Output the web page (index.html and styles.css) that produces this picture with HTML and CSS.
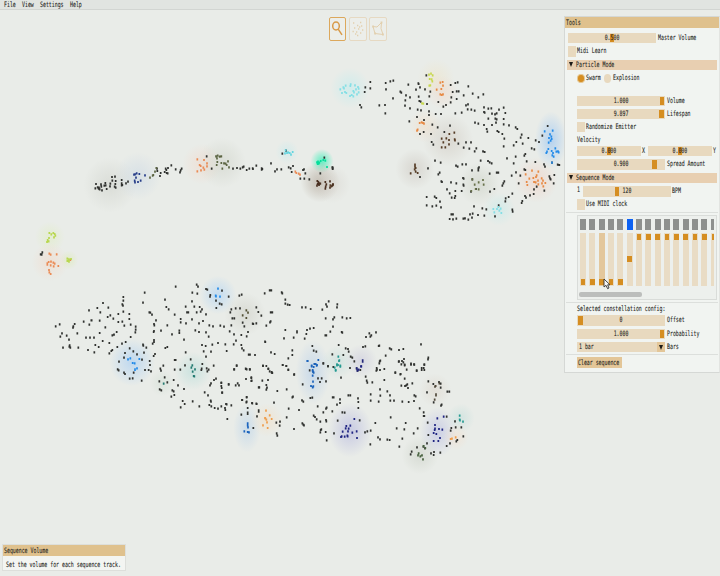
FILE: index.html
```html
<!DOCTYPE html>
<html lang="en">
<head>
<meta charset="utf-8">
<title>Particle sequencer</title>
<link rel="stylesheet" href="styles.css">
</head>
<body>
<svg class="field" id="field" viewBox="0 0 720 576"></svg>
<nav class="menu"><span class="t">File</span><span class="t">View</span><span class="t">Settings</span><span class="t">Help</span></nav>
<div class="tools">
  <div class="tool active"><svg viewBox="0 0 18 24"><ellipse cx="7" cy="9" rx="3.3" ry="4"/><path d="M9.2 12.2L13 17.8"/></svg></div>
  <div class="tool"><svg viewBox="0 0 18 24"><path stroke-width="1.3" d="M4 6h1.3M11 5.5h1.3M8 8.5h1.3M12 9h1.3M5 11h1.3M9 12h1.3M13 13h1.3M3.5 14.5h1.3M7 15h1.3M11 16h1.3M8 18.5h1.3M10 10h1.3M6 17h1.3"/></svg></div>
  <div class="tool"><svg viewBox="0 0 18 24"><path d="M4 9.5L8 10L12.5 5.5L12 11.5L14 17.5L6 16.5Z"/><path stroke-width="1.8" d="M3.2 9.5h1.8M11.6 5.5h1.8M13 17.5h1.8M5.2 16.5h1.8"/></svg></div>
</div>

<section class="panel">
  <h2 class="title"><span class="t">Tools</span></h2>
  <div class="content">
    <div class="row top"><div class="slider"><i class="grab mid"></i><span class="t c">0.500</span></div><span class="t">Master Volume</span></div>
    <div class="row top tight"><i class="check"></i><span class="t">Midi Learn</span></div>
    <div class="header"><b class="arrow"></b><span class="t">Particle Mode</span></div>
    <div class="row radios"><i class="radio on"></i><span class="t swarm">Swarm</span><i class="radio"></i><span class="t">Explosion</span></div>
    <div class="row"><div class="slider"><i class="grab end"></i><span class="t c">1.000</span></div><span class="t">Volume</span></div>
    <div class="row"><div class="slider"><i class="grab near"></i><span class="t c">9.897</span></div><span class="t">Lifespan</span></div>
    <div class="row tight"><i class="check"></i><span class="t">Randomize Emitter</span></div>
    <div class="row velocity"><span class="t">Velocity</span></div>
    <div class="row"><div class="slider half"><i class="grab mid"></i><span class="t c">0.000</span></div><span class="t axis">X</span><div class="slider half"><i class="grab mid"></i><span class="t c">0.000</span></div><span class="t">Y</span></div>
    <div class="row"><div class="slider"><i class="grab spread"></i><span class="t c">0.900</span></div><span class="t">Spread Amount</span></div>
    <div class="header"><b class="arrow"></b><span class="t">Sequence Mode</span></div>
    <div class="row"><span class="t beat">1</span><div class="slider"><i class="grab tempo"></i><span class="t c">120</span></div><span class="t">BPM</span></div>
    <div class="row tight midi"><i class="check"></i><span class="t">Use MIDI clock</span></div>
    <hr>
    <div class="sequencer"><div class="tracks" id="tracks"></div><div class="scroll"></div></div>
    <hr>
    <div class="row caption"><span class="t">Selected constellation config:</span></div>
    <div class="row"><div class="slider"><i class="grab start"></i><span class="t c">0</span></div><span class="t">Offset</span></div>
    <div class="row"><div class="slider"><i class="grab end"></i><span class="t c">1.000</span></div><span class="t">Probability</span></div>
    <div class="row"><div class="slider combo"><span class="t">1 bar</span><div class="drop"><b class="arrow"></b></div></div><span class="t">Bars</span></div>
    <hr class="last">
    <div class="button"><span class="t">Clear sequence</span></div>
  </div>
</section>
<svg class="cursor" viewBox="0 0 8 12"><path d="M1 1V9L3 7.3L4.6 10.7L6 10L4.6 6.8H7Z"/></svg>

<aside class="tip"><h2 class="title"><span class="t">Sequence Volume</span></h2><p><span class="t">Set the volume for each sequence track.</span></p></aside>
<script src="field.js"></script>
</body>
</html>
```
FILE: styles.css
```css
* { box-sizing: border-box; }
body { margin: 0; width: 720px; height: 576px; overflow: hidden; position: relative; background: #e9ece8; color: #262622; font: 7.4px/10px "DejaVu Sans Mono", monospace; }
.t { display: block; white-space: nowrap; transform: scaleX(.662); transform-origin: left center; -webkit-text-stroke: .1px #262622; }
.field { position: absolute; inset: 0; width: 720px; height: 576px; }
.menu { position: relative; display: grid; grid-template-columns: 18.3px 18.3px 30px 40px; height: 10px; padding-left: 3.5px; background: #e1e4e1; border-bottom: 1px solid #d2d5d2; line-height: 10px; }
.tools { position: absolute; left: 328.5px; top: 16.5px; display: flex; gap: 2.8px; }
.tool { width: 17.7px; height: 24px; border: 1.4px solid #e6d9c2; border-radius: 2px; background: #eceeea; }
.tool svg { display: block; width: 18px; height: 24px; margin: -1px; fill: none; stroke: #e2cfae; stroke-width: 1; }
.tool.active { border-color: #dca85c; }
.tool.active svg { stroke: #d89a48; stroke-width: 1.5; }
.title { margin: 0; font: inherit; background: #dfc18d; padding-left: 1.3px; height: 11px; line-height: 11px; }
.panel { position: absolute; left: 564px; top: 16px; width: 156px; height: 357px; background: #f1f4f1; border: 1px solid #d5d8d5; border-right-color: #e2e4e1; }
.content { padding: 5px 2px 0; }
.row { display: flex; height: 10.4px; margin: 0 0 2.9px 10px; gap: 1.6px; line-height: 10.6px; }
.row.top { margin-left: 1px; }
.row.tight { gap: 1px; }
.slider { position: relative; width: 88px; flex: none; background: #e8d9bf; }
.c { position: relative; transform-origin: center; text-align: center; }
.grab { position: absolute; top: 1px; bottom: 1px; width: 4.6px; background: #d58e22; }
.mid { left: calc(50% - 2.3px); }
.end { right: .6px; }
.near { right: 1.4px; }
.start { left: .6px; width: 5.5px; }
.spread { left: 75px; }
.tempo { left: 32px; }
.check { width: 8px; height: 10.4px; background: #e8d9bf; flex: none; }
.header { display: flex; align-items: center; height: 10.6px; margin-bottom: 2.9px; background: #e8cfb1; gap: 3.2px; padding-left: 1.6px; }
.arrow { width: 0; height: 0; border: 2.8px solid transparent; border-top: 5.6px solid #1d1b17; border-bottom: 0; }
.radios { margin-bottom: 12.1px; align-items: center; gap: 1.5px; }
.radio { width: 7.6px; height: 8.6px; border-radius: 50%; background: #e8d9bf; flex: none; }
.radio.on { background: #d58e22; border: 1.2px solid #e5c997; }
.swarm { width: 16px; }
.velocity { height: 10.7px; line-height: 9px; margin-bottom: 0; }
.half { width: 63.8px; }
.axis { width: 4px; }
.beat { width: 4px; line-height: 8px; }
.midi { margin-bottom: 2px; }
hr { border: 0; height: 1px; margin: 0 -1px 2px; background: #dcdfdc; }
.sequencer { margin: 0 0 2px 9.5px; width: 140px; height: 85px; border: 1px solid #d9dcd9; background: #edf0ed; padding: 3px 1.6px 0 2.5px; }
.tracks { display: flex; gap: 3.35px; overflow: hidden; height: 68px; }
.track { flex: none; width: 6px; }
.step { height: 11.5px; background: #8e908e; margin-bottom: 2.6px; }
.step.now { background: #0d62f3; }
.lane { height: 52.8px; background: #e9dcc5; padding: 0 .7px; overflow: hidden; }
.lane.hover { background: #e3c79c; }
.lane i { display: block; height: 6px; background: #d58e22; }
.scroll { width: 62.5px; height: 5px; border-radius: 2px; background: #bcbebc; margin: 5px 0 0 -1px; }
.caption { height: 10.5px; margin-bottom: 0; line-height: 7.4px; }
.combo { display: flex; justify-content: space-between; padding-left: 1.5px; }
.drop { width: 8px; background: #e3c698; display: flex; align-items: center; justify-content: center; }
.last { margin-bottom: 1.4px; margin-top: -.7px; }
.button { margin-left: 10px; width: 45px; height: 11px; line-height: 11px; padding-left: 1.4px; background: #e3c698; }
.cursor { position: absolute; left: 603px; top: 278px; width: 8px; height: 12px; fill: #f7f7f7; stroke: #333; stroke-width: .9; }
.tip { position: absolute; left: 2px; top: 544px; width: 124px; height: 27px; background: #f3f5f2; border: 1px solid #dddfdb; }
.tip p { margin: 0; padding: 3.6px 0 0 3px; line-height: 9px; }
```
FILE: field.js
```js
const halos = [
  [350,88,17,"#bfecee"],[436,78,16,"#eee5cb"],[442,92,14,"#efd9cb"],[425,126,14,"#f0ddc8"],[448,140,22,"#cfc9c0"],
  [415,169,17,"#ccc7c0"],[551,140,14,"#8fc0f5",1.7],[536,180,19,"#f2cfc2"],[479,184,18,"#cbd0c4"],[499,209,14,"#c4ebea"],
  [110,185,23,"#cfd2cb"],[138,176,20,"#cbd8e4"],[202,164,17,"#f2d8ca"],[222,163,21,"#ced2c8"],[287,152,10,"#c7eaec"],
  [322,161,10,"#00f0a8"],[320,182,17,"#a99b8c"],[332,184,16,"#d8d5cf"],[50,237,13,"#e0edc2"],[69,260,8,"#dcebb4"],[50,262,16,"#f2d9c9"],
  [218,295,16,"#a8d0f5"],[245,314,18,"#cdcec5"],[132,362,20,"#a0caf5"],[193,371,16,"#b5dcd8"],[162,383,11,"#d2dfd4"],
  [313,372,15,"#b0cbea",1.8],[338,362,14,"#c3ddda"],[361,361,14,"#c9c8dc"],[247,428,12,"#b8d2ea",1.7],[267,420,14,"#f3dfc5"],
  [350,430,19,"#b0b2de",1.2],[435,390,14,"#ddd6cc"],[438,432,16,"#b7bce3",1.3],[461,418,12,"#c4dfdc"],[456,437,11,"#f2dfce"],[420,455,16,"#cbd1c7"]
];
const K = "#30322f";
/* Clusters: origin x, origin y, colour, positions in thirds of a pixel */
const clusters = [
[330,60,K,"121,66 106,82 121,85 104,96 90,135 94,142 148,136 165,135 166,160 167,69 181,64 190,62 168,88 189,115 211,95 214,98 228,106 226,121 225,137 240,145 240,112 235,74 238,184 258,89 265,70 270,82 266,72 266,110 268,123 272,125 263,149 273,151 261,171 285,88 301,95 298,109 291,132 289,46 297,154 297,165 317,162 333,162 282,180 325,126 340,140 348,135 362,127 362,75 376,69 383,67 368,96 380,94 386,94 364,112 380,117 415,79 401,106 428,101 445,112 460,103 408,136 414,133 413,148 424,149 434,152 376,160 395,158 462,142 462,156 464,158 475,146 484,145 486,161 475,176 495,163 500,160 496,176 500,178 507,149 521,143 526,159 521,177 521,193 498,188 486,195 462,195 470,207 472,215 445,191 435,188 502,213 506,216 517,222 523,236 537,196 557,202 562,207 575,224 572,233 559,246 551,256 578,251 595,234 617,241 627,246 637,227 653,198 605,265 613,268 586,282 583,287 557,290 531,295 521,259 307,194 323,202 360,197 303,222 281,216 270,222 305,246 310,254 343,216 385,251 401,263 408,247 423,247 418,266 434,274 439,265 459,274 464,276 315,302 332,308 294,325 329,338 325,343 378,317 383,320 397,313 408,313 426,331 445,325 447,322 445,331 452,302 474,303 479,307 485,310 479,341 500,338 505,338 523,364 520,370 517,377 493,387 480,395 545,347 558,337 571,347 566,370 583,328 586,330 590,304 616,306 551,310 642,313 645,320 666,308 683,314 688,315 673,345 658,349 660,355 662,358 671,370 643,392 620,380 612,388 611,402 600,406 585,408 588,413 577,423 575,429 547,401 536,411 527,415 526,424 547,449 548,455 506,436 495,469 469,448 457,445 463,467 444,465 432,439 428,461 420,463 426,473 415,479 405,475 400,476 379,476 369,478 359,477 364,463 369,463 333,442 330,425 319,414 314,410 290,411 290,436 307,439 319,437 334,364 336,366 363,367 379,370 351,388 359,400 376,393 376,408 374,414 365,413 395,393 399,354 401,356 400,374 401,377 423,395 427,358 438,387 270,351 7,322 8,325"],
[330,60,"#85dfe5","31,88 40,82 42,85 47,77 36,99 45,96 49,99 62,73 61,78 70,93 72,97 75,76 78,88 84,81 86,86 86,97 81,103 65,105 70,109 60,108 505,441 490,447 501,447 512,446 493,457 514,459 508,452"],
[330,60,"#c8d84d","297,44 303,41 308,46 299,57 305,58 307,64 301,76 298,77 276,130 280,131"],
[330,60,"#e78a45","331,68 338,66 339,77 320,89 334,87 331,103 335,105 339,103 269,189 275,187 279,189 282,191 263,209 261,212 606,332 625,335 587,343 620,346 598,356 610,354 618,351 635,355 624,362 639,362 590,366 592,375 617,367 625,373 636,370 646,369 640,379 612,366"],
[330,60,"#553c26","373,218 358,222 335,236 349,235 357,240 374,238 375,241 357,253 340,247 335,262 346,262 255,314 255,320 257,324 254,328 257,335 242,340 263,339 9,374 4,379 1,376"],
[330,60,"#238be9","644,214 668,212 660,223 664,230 657,234 665,237 662,242 656,248 676,265 655,267 651,275 649,279 665,273 669,279 679,275 684,274 686,277 667,286 671,290 666,308"],
[330,60,"#68714a","427,358 459,360 446,367 434,374 461,374 437,387 446,388 424,393"],
[30,140,K,"198,132 196,145 203,142 206,146 209,148 207,143 213,133 214,140 216,151 223,137 226,129 230,147 241,131 240,139 246,111 255,110 247,122 257,123 256,132 254,140 257,143 275,120 275,130 277,135 275,136 288,130 294,125 227,136 390,108 392,99 381,86 382,93 404,96 410,99 413,100 409,90 407,86 414,84 424,76 437,88 450,97 452,91 455,86 530,49 545,86 609,86 621,84 631,86 638,82 641,80 650,90 658,86 668,85 669,87 679,77 695,85 697,87 695,89 723,70 735,94 741,88 754,88 757,41 768,32 776,82 782,85 789,78 785,96 811,116 823,116 819,90 822,88 826,100 838,118 871,100 883,53 908,83 908,87 37,337 32,343 35,344"],
[30,140,"#263d88","312,104 315,103 320,100 328,102 318,113 314,122 315,127 324,126 332,122 345,106"],
[30,140,"#ea8b55","502,58 522,60 509,75 512,78 531,70 531,79 520,83 513,91 523,89 502,94 796,95 799,99 806,101 810,104 58,341 62,344 80,343 52,370 56,366 63,365 70,368 74,371 52,374 62,376 71,379 85,378 57,390 58,397 62,402 121,360"],
[30,140,"#5c6543","558,49 563,47 569,50 574,49 561,55 562,66 560,75 574,69 582,70 587,71 594,64 590,75 577,86 597,82 370,105 360,113 368,107 375,95 379,84"],
[30,140,"#64d5df","767,31 765,40 774,37 779,39 788,36 783,44 771,39"],
[30,140,"#04de9a","861,67 864,65 868,68 863,72 872,63 880,60 886,62 866,71 891,81"],
[30,140,"#4a3021","862,123 865,126 868,130 863,132 867,135 861,137 871,131 886,126 889,133 887,140 886,146 900,124 909,133 907,137 900,143"],
[30,140,"#b8d74f","58,279 64,283 70,279 74,282 76,287 72,292 57,294 53,300 56,304 51,306 112,356 117,358 123,357 112,363 117,365"],
[40,275,K,"47,154 59,148 104,147 99,158 100,154 66,175 80,182 61,185 87,194 112,175 131,140 155,136 147,106 148,149 154,136 172,99 189,84 205,98 179,137 181,112 211,121 203,126 220,131 196,157 179,174 69,218 89,211 91,218 88,215 115,218 138,188 150,188 162,188 144,225 163,232 166,210 176,216 188,198 208,204 232,216 208,235 214,228 217,225 217,181 222,179 230,171 246,206 257,201 272,186 287,155 287,164 286,172 272,149 253,152 247,140 235,141 235,117 250,110 268,117 268,132 247,88 249,92 250,77 250,66 309,83 314,53 375,74 407,35 379,96 386,103 404,119 328,112 331,113 336,119 348,136 342,147 343,151 342,168 341,171 363,167 382,151 396,178 418,167 418,174 422,132 422,142 437,95 456,79 463,95 479,96 486,103 482,110 457,53 472,56 470,29 474,35 498,42 502,44 511,60 510,65 546,47 528,77 539,86 545,88 529,99 566,65 598,62 605,59 600,100 587,100 574,103 571,112 577,130 583,130 441,112 445,112 470,112 498,118 456,133 438,145 477,145 489,138 508,151 519,154 541,152 552,155 574,151 466,166 477,171 498,172 506,185 432,194 569,169 582,178 604,180 608,143 613,154 624,171 620,184 640,147 638,146 649,145 649,97 655,111 588,197 604,210 606,220 611,226 556,208 534,204 517,209 497,213 486,210 491,229 513,230 498,245 560,228 581,208 626,239 630,239 645,240 309,209 310,212 319,218 312,233 291,238 280,229 269,220 255,234 252,248 237,260 233,283 236,286 252,293 255,297 281,293 278,310 269,311 305,317 315,285 326,285 333,289 329,258 330,270 341,243 345,237 338,206 342,201 342,195 376,219 382,216 437,232 452,253 435,271 421,284 404,284 404,255 407,255 361,281 370,272 363,287 358,319 359,343 364,346 374,307 382,322 401,315 414,331 397,346 401,349 403,360 394,365 432,342 428,378 434,387 306,254 487,267 485,281 484,285 500,280 506,284 502,289 521,272 528,311 522,315 513,325 510,331 494,352 504,361 512,377 513,380 544,323 544,333 545,339 547,353 566,328 590,272 583,283 587,331 597,331 617,281 620,283 630,283 634,307 634,318 656,337 620,367 606,375 619,382 636,384 649,386 560,388"],
[40,275,"#248be8","534,41 527,62 540,65 528,64 264,253 271,250 298,252 278,264 284,265 285,283 291,280 285,285"],
[40,275,"#237a70","457,271 454,278 465,283 458,290 461,303 463,304 371,326"],
[40,275,"#535035","619,106 624,113 608,121 619,129"],
[240,275,K,"74,55 89,46 94,46 125,52 127,55 136,74 136,86 143,89 149,90 186,97 197,97 212,102 247,104 258,88 261,95 266,79 292,88 291,97 92,112 97,112 64,122 92,139 90,142 79,152 136,165 132,190 161,188 171,169 171,172 199,177 194,191 201,165 210,161 221,159 256,181 259,181 271,170 279,155 305,171 307,173 257,130 279,133 283,127 307,127 320,130 331,129 75,200 76,201 93,232 104,237 157,226 157,240 145,250 128,270 139,273 145,284 163,298 217,213 221,227 229,230 277,238 296,210 317,220 324,222 326,230 310,240 332,245 337,248 343,259 330,279 350,280 353,287 361,285 369,216 376,214 378,186 388,175 394,181 391,185 408,172 416,213 418,212 437,242 421,257 418,265 433,282 411,284 409,287 449,220 454,223 477,225 490,222 492,252 490,262 477,259 494,271 513,266 522,268 530,287 543,208 565,248 564,253 553,269 551,279 545,285 466,293 482,297 500,284 250,265 264,273 69,273 79,273 85,282 95,291 97,294 209,286 280,276"],
[240,275,"#1b60b5","203,258 235,255 223,267 215,274 230,272 218,285 219,291 221,293"],
[240,275,"#219790","295,245 298,256 291,268 301,275 287,287 284,278"],
[240,275,"#23277a","368,256 368,260 363,274 352,287"],
[220,360,K,"50,17 42,28 78,27 89,28 129,17 145,26 149,34 155,38 127,62 144,60 94,54 95,62 78,57 53,70 26,73 4,69 6,98 139,75 141,83 139,89 118,82 188,15 199,18 205,30 222,44 248,73 200,88 172,93 67,120 80,111 80,125 97,130 110,132 83,144 83,158 64,164 18,132 34,136 15,144 16,150 4,139 22,177 116,151 116,155 111,169 162,128 206,146 237,150 200,172 222,207 180,185 169,188 179,197 170,220 172,227 100,204 83,162 247,190 250,194 252,196 217,112 219,110 246,121 250,125 271,114 277,113 294,55 300,66 305,55 318,64 363,53 310,10 324,19 338,112 341,112 360,118 360,129 351,134 385,106 391,106 414,115 415,126 415,144 320,143 318,146 310,157 293,139 281,167 285,171 290,178 301,185 318,180 319,184 337,154 367,157 374,158 353,182 302,210 304,208 301,217 317,216 320,241 342,220 419,181 437,50 440,62 442,68 457,67 470,24 493,60 526,38 541,43 554,56 536,5 546,3 544,13 554,14 573,14 583,14 590,32 605,24 613,14 613,30 544,77 555,78 562,73 559,76 577,70 564,84 480,88 502,94 510,106 452,103 452,122 481,107 476,125 511,122 522,122 547,125 566,126 582,123 583,106 587,109 599,145 611,157 613,168 611,168 621,97 625,64 640,72 657,66 662,71 662,83 682,95 688,95 641,127 665,134 663,137 512,172 466,189 452,212 442,214 435,217 451,253 474,232 480,238 502,239 509,240 538,260 530,205 553,208 547,236 557,189 581,220 593,205 623,188 625,225 621,250 575,275 572,283 610,260 615,265 591,262 633,280 642,276 641,285 661,278 680,258 690,250 709,244 712,240 730,229 724,202 705,184 707,202 694,204 692,212 680,170 479,4 480,30"],
[220,360,"#1c64bd","262,3 287,12 275,17 281,21 291,15 278,33 278,47 279,65 273,78 278,82 280,79 83,190 83,196 84,202 73,214 83,216 87,217"],
[220,360,"#269b91","354,15 351,16 361,17 347,30 357,3 719,167 719,179 729,185 720,181"],
[220,360,"#ef9e4d","138,152 149,166 155,177 136,175 139,179 141,187 129,196 143,204 135,174 707,232 692,237 696,236"],
[220,360,"#202582","403,177 391,197 379,198 377,205 386,206 368,215 384,214 397,218 410,214 382,227 365,229 363,231 374,230 383,229 411,234 424,19 416,29 410,25 671,170 652,175 645,195 645,206 644,210 657,207 667,209 641,219 649,222 660,234 641,243 655,243"],
[220,360,"#50483a","647,78 645,80 648,103 648,106 644,119 658,70"],
[220,360,"#47623f","611,258 616,264 596,280 606,286 594,286 601,289 609,298"],
[180,400,K,"2,22 38,4 58,19 94,19 104,24 88,15 114,26"]
];
const field = document.getElementById("field");
let defs = '<defs>', body = '';
halos.forEach(([x, y, r, c, s = 1], i) => {
  defs += `<radialGradient id="h${i}"><stop offset="0" stop-color="${c}" stop-opacity=".58"/><stop offset=".5" stop-color="${c}" stop-opacity=".3"/><stop offset="1" stop-color="${c}" stop-opacity="0"/></radialGradient>`;
  body += `<ellipse cx="${x}" cy="${y}" rx="${r * 1.15}" ry="${r * 1.2 * s}" fill="url(#h${i})"/>`;
});
clusters.forEach(([ox, oy, c, pts]) => {
  const d = pts.split(" ").map(p => {
    const [x, y] = p.split(",").map(Number);
    return `M${(ox + x / 3 - .85).toFixed(2)} ${(oy + y / 3 - 1.1).toFixed(2)}h1.7v2.2h-1.7z`;
  }).join("");
  body += `<path fill="${c}" d="${d}"/>`;
});
field.innerHTML = defs + '</defs>' + body;

const offsets = [46, 46, 46, 46, 46, 23.5, 1.3, 1.3, 1.3, 1.3, 1.3, 1.3, 1.3, 1.3, 1.3];
document.getElementById("tracks").innerHTML = offsets.map((y, i) =>
  `<div class="track"><div class="step${i === 5 ? " now" : ""}"></div><div class="lane${i === 2 ? " hover" : ""}"><i style="margin-top:${y}px"></i></div></div>`).join("");
```
